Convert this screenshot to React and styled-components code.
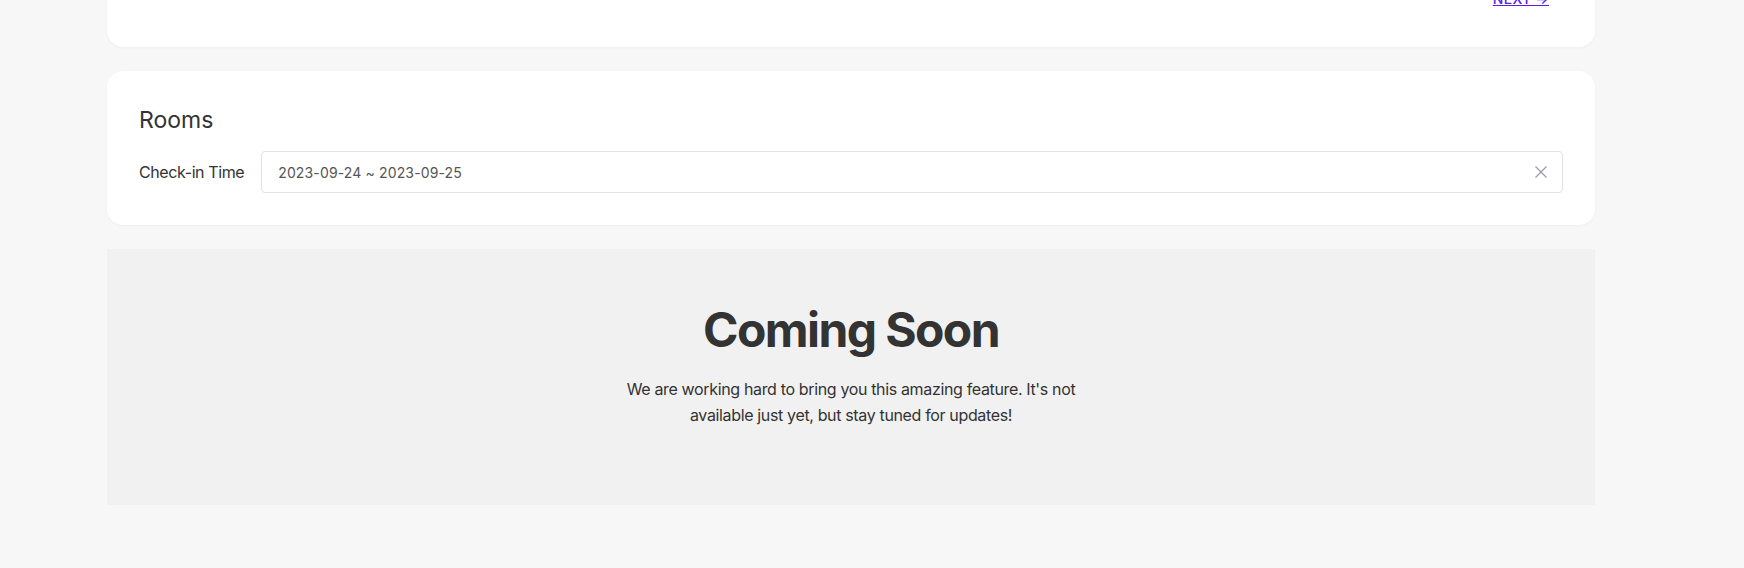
import React, { useState } from 'react';
import styled, { createGlobalStyle } from 'styled-components';

const GlobalStyle = createGlobalStyle`
  html, body {
    margin: 0;
    padding: 0;
    background: #f7f7f7;
    font-family: Inter, "Noto Sans", sans-serif;
    color: #333;
    overflow: hidden;
  }
`

const Page = styled.div`
  padding: 0 149px 64px 107px;
  display: flex;
  flex-direction: column;
  gap: 24px;
`

const Card = styled.section`
  background: #fff;
  border-radius: 16px;
  box-shadow: 0 1px 3px rgba(0, 0, 0, 0.04);
  padding: ${(props) => props.pad || '35px 32px 32px'};
  margin-top: ${(props) => props.offset || '0'};
`

const Footer = styled.div`
  display: flex;
  justify-content: flex-end;
  padding-right: 14px;
`

const NextLink = styled.a`
  font-size: 14px;
  line-height: 20px;
  font-weight: 500;
  color: #5a1ee8;
  text-decoration: underline;
  letter-spacing: 0.02em;
  cursor: pointer;
`

const Title = styled.h2`
  margin: 0 0 16px;
  font-size: 23px;
  line-height: 29px;
  font-weight: 400;
  color: #333;
`

const Row = styled.div`
  display: flex;
  align-items: center;
`

const Label = styled.label`
  font-size: 16px;
  letter-spacing: -0.4px;
  color: #333;
  margin-right: 17px;
  white-space: nowrap;
`

const RangeInput = styled.div`
  flex: 1;
  height: 42px;
  box-sizing: border-box;
  border: 1px solid #e2e2e8;
  border-radius: 4px;
  display: flex;
  align-items: center;
  justify-content: space-between;
  padding: 0 14px 0 16px;
  font-size: 14px;
  color: #555;
  letter-spacing: 0.01em;
`

const ClearButton = styled.button`
  border: 0;
  background: none;
  padding: 0;
  display: flex;
  color: #9a9aa8;
  cursor: pointer;
`

const Soon = styled.section`
  background: #f1f1f1;
  padding: 52px 24px 77px;
  text-align: center;
`

const SoonTitle = styled.h1`
  margin: 0 0 17px;
  font-size: 48px;
  line-height: 58px;
  font-weight: 700;
  letter-spacing: -1.6px;
  color: #333;
`

const SoonText = styled.p`
  margin: 0 auto;
  max-width: 500px;
  font-size: 16px;
  line-height: 26px;
  letter-spacing: -0.35px;
  color: #333;
`

export default function App() {
  const [range, setRange] = useState('2023-09-24 ~ 2023-09-25');

  return (
    <>
      <GlobalStyle />
      <Page>
        <Card offset="-40px" pad="29px 32px 38px">
          <Footer>
            <NextLink>NEXT →</NextLink>
          </Footer>
        </Card>

        <Card>
          <Title>Rooms</Title>
          <Row>
            <Label>Check-in Time</Label>
            <RangeInput>
              <span>{range}</span>
              <ClearButton onClick={() => setRange('')}>
                <svg width="14" height="14" viewBox="0 0 14 14" fill="none" stroke="currentColor" strokeWidth="1.2">
                  <path d="M1.5 1.5l11 11M12.5 1.5l-11 11" />
                </svg>
              </ClearButton>
            </RangeInput>
          </Row>
        </Card>

        <Soon>
          <SoonTitle>Coming Soon</SoonTitle>
          <SoonText>
            We are working hard to bring you this amazing feature. It's not available just yet, but stay tuned for updates!
          </SoonText>
        </Soon>
      </Page>
    </>
  );
}
